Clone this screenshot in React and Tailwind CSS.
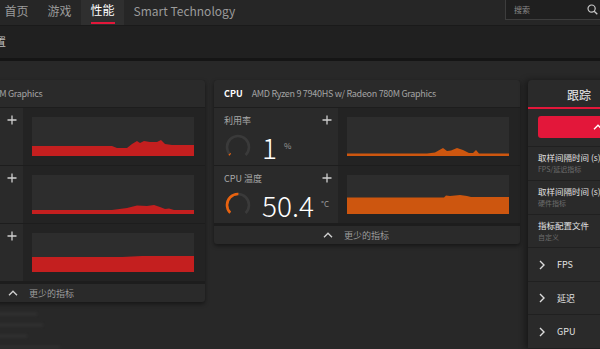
import React from "react";

function Plus() {
  return (
    <svg width="10" height="10" viewBox="0 0 10 10" className="block">
      <path d="M5 0.5V9.5M0.5 5H9.5" stroke="#cfcfcf" strokeWidth="1.3" />
    </svg>
  );
}

function ChevronUp({ color = "#cfcfcf" }) {
  return (
    <svg width="10" height="6" viewBox="0 0 10 6" className="block">
      <path d="M1 5.2L5 1.3L9 5.2" fill="none" stroke={color} strokeWidth="1.4" />
    </svg>
  );
}

function ChevronRight() {
  return (
    <svg width="6" height="10" viewBox="0 0 6 10" className="block">
      <path d="M1 1L5 5L1 9" fill="none" stroke="#dcdcdc" strokeWidth="1.4" />
    </svg>
  );
}

function Area({ pts, color }) {
  const d =
    "M" + pts.map((p) => p.join(",")).join(" L") + " L162,39 L0,39 Z";
  return (
    <svg width="162" height="39" viewBox="0 0 162 39" className="block">
      <path d={d} fill={color} />
    </svg>
  );
}

function Gauge({ pct }) {
  const r = 11;
  const C = 2 * Math.PI * r;
  const arc = C * 0.75;
  return (
    <svg width="26" height="26" viewBox="0 0 26 26" className="block">
      <circle
        cx="13"
        cy="13"
        r={r}
        fill="none"
        stroke="#3a3a3a"
        strokeWidth="2.6"
        strokeDasharray={`${arc} ${C}`}
        transform="rotate(135 13 13)"
      />
      <circle
        cx="13"
        cy="13"
        r={r}
        fill="none"
        stroke="#e8620f"
        strokeWidth="2.6"
        strokeDasharray={`${Math.max(arc * pct, 1.2)} ${C}`}
        transform="rotate(135 13 13)"
      />
    </svg>
  );
}

function MetricRow({ label, value, unit, pct, pts, color }) {
  return (
    <div className="flex h-[57px]">
      <div className="w-[124px] bg-[#2a2a2a] flex flex-col pl-[10px] pr-[6px] pt-[6px]">
        <div className="flex items-center justify-between h-[12px]">
          <span className="text-[9px] leading-none text-[#a8a8a8]">{label}</span>
          <Plus />
        </div>
        <div className="flex items-center mt-[7px] pl-[1px]">
          <Gauge pct={pct} />
          <span className="ml-[11px] text-[28px] leading-none text-white font-light">
            {value}
          </span>
          <span className="ml-[7px] text-[8px] leading-none text-[#9a9a9a] mt-[-3px]">
            {unit}
          </span>
        </div>
      </div>
      <div className="flex-1 bg-[#232323] pl-[9px] pr-[11px] pt-[9px]">
        <div className="bg-[#2d2d2d] h-[39px]">
          <Area pts={pts} color={color} />
        </div>
      </div>
    </div>
  );
}

function Footer() {
  return (
    <div className="mt-[2px] h-[18px] bg-[#2a2a2a] flex items-center justify-center pr-[22px]">
      <ChevronUp />
      <span className="ml-[11px] text-[9px] leading-none text-[#9c9c9c]">更少的指标</span>
    </div>
  );
}

const RED = "#c41f1f";
const ORANGE = "#cd560f";

const gpu1 = [
  [0, 29], [60, 29], [80, 29], [85, 31], [95, 31], [100, 27], [105, 24], [108, 26],
  [112, 24], [118, 25], [125, 25], [129, 23], [133, 27], [140, 28], [162, 28],
];
const gpu2 = [
  [0, 35], [80, 35], [95, 33], [105, 30.5], [115, 31], [122, 30], [128, 32], [133, 34],
  [137, 33.5], [142, 35], [162, 35],
];
const gpu3 = [[0, 24], [90, 24], [110, 23], [162, 23]];
const cpu1 = [
  [0, 36.5], [80, 36.5], [88, 35.5], [96, 31], [100, 34], [104, 33.5], [110, 31],
  [116, 33], [122, 36], [126, 36], [129, 33], [132, 36.5], [162, 36.5],
];
const cpu2 = [
  [0, 22.5], [97, 22.5], [99, 20.5], [103, 21], [108, 20.5], [113, 20], [120, 21],
  [124, 22], [162, 22],
];

function Card({ name, kind, rows, headerPad }) {
  return (
    <div className="w-[306px] shrink-0 bg-[#1d1d1d] rounded-[3px] overflow-hidden shadow-[0_2px_4px_rgba(0,0,0,0.45)] flex flex-col gap-px self-start">
      <div className={`h-[27px] bg-[#2a2a2a] flex items-center whitespace-nowrap ${headerPad}`}>
        <span className="text-[9px] leading-none font-bold text-white">{kind}</span>
        <span className="ml-[9px] text-[9px] leading-none text-[#a3a3a3] tracking-[-0.3px]">{name}</span>
      </div>
      {rows.map((r, i) => (
        <MetricRow key={i} {...r} />
      ))}
      <Footer />
    </div>
  );
}

function PanelItem({ title, sub }) {
  return (
    <div className="h-[34px] border-b border-[#202020] pl-[10px] pt-[5px] flex flex-col whitespace-nowrap">
      <span className="text-[8.5px] leading-[10px] text-[#e2e2e2]">{title}</span>
      <span className="mt-[3px] text-[7px] leading-[9px] text-[#6c6c6c]">{sub}</span>
    </div>
  );
}

function PanelGroup({ title }) {
  return (
    <div className="h-[34px] border-b border-[#202020] pl-[11px] flex items-center">
      <ChevronRight />
      <span className="ml-[12px] text-[9px] leading-none text-[#e2e2e2]">{title}</span>
    </div>
  );
}

export default function App() {
  return (
    <div className="w-[600px] h-[349px] overflow-hidden bg-[#282828] font-['Noto_Sans_CJK_SC','Noto_Sans',sans-serif] flex flex-col">
      {/* top nav */}
      <div className="h-[26px] shrink-0 bg-[#262626] border-b border-[#1a1a1a] flex">
        <div className="flex -ml-[5px] text-[12px] leading-none">
          <div className="px-[9.5px] flex items-center pb-[3px] text-[#9b9b9b]">首页</div>
          <div className="px-[9.5px] flex items-center pb-[3px] text-[#9b9b9b]">游戏</div>
          <div className="px-[9.5px] flex flex-col items-stretch bg-[#2f2f2f]">
            <div className="flex-1 flex items-center pb-[1px] text-white">性能</div>
            <div className="h-[2.5px] bg-[#e3173a] mb-[1px]" />
          </div>
          <div className="px-[9.5px] flex items-center pb-[3px] text-[#9b9b9b] whitespace-nowrap">
            Smart Technology
          </div>
        </div>
        <div className="ml-auto mt-[0px] h-[20px] w-[95px] bg-[#1f1f1f] border border-r-0 border-t-0 border-[#3d3d3d] flex items-center pl-[8px] pr-[2px]">
          <span className="text-[8px] leading-none text-[#8a8a8a]">搜索</span>
          <svg width="11" height="11" viewBox="0 0 11 11" className="ml-auto block">
            <circle cx="4.6" cy="4.6" r="3.6" fill="none" stroke="#c8c8c8" strokeWidth="1.2" />
            <path d="M7.2 7.2L10.3 10.3" stroke="#c8c8c8" strokeWidth="1.3" />
          </svg>
        </div>
      </div>

      {/* sub header */}
      <div className="h-[35px] shrink-0 bg-[#202020] border-b-[3px] border-[#151515] flex items-center">
        <span className="-ml-[16px] text-[11px] leading-none text-[#bdbdbd] pb-[1px]">设置</span>
      </div>

      {/* content */}
      <div className="flex-1 flex pt-[19px] -ml-[101px] min-h-0">
        <div className="w-[306px] flex flex-col shrink-0">
          <Card
            kind="GPU"
            name="AMD Radeon 780M Graphics"
            headerPad="pl-[6px]"
            rows={[
              { label: "利用率", value: "0", unit: "%", pct: 0, pts: gpu1, color: RED },
              { label: "GPU 温度", value: "42", unit: "°C", pct: 0.42, pts: gpu2, color: RED },
              { label: "VRAM", value: "38", unit: "%", pct: 0.38, pts: gpu3, color: RED },
            ]}
          />
          <div className="flex flex-col items-start gap-[7px] mt-[10px] blur-[1px]">
            <div className="w-[138px] h-[4px] bg-[#2f2f2f]" />
            <div className="w-[144px] h-[4px] bg-[#2f2f2f]" />
            <div className="w-[128px] h-[4px] bg-[#2f2f2f]" />
            <div className="w-[161px] h-[4px] bg-[#2e2e2e]" />
          </div>
        </div>
        <div className="ml-[9px]">
          <Card
            kind="CPU"
            name="AMD Ryzen 9 7940HS w/ Radeon 780M Graphics"
            headerPad="pl-[10px]"
            rows={[
              { label: "利用率", value: "1", unit: "%", pct: 0, pts: cpu1, color: ORANGE },
              { label: "CPU 温度", value: "50.4", unit: "°C", pct: 0.504, pts: cpu2, color: ORANGE },
            ]}
          />
        </div>
        {/* right panel */}
        <div className="ml-[8px] w-[150px] shrink-0 bg-[#2a2a2a] rounded-tl-[4px] shadow-[-3px_0_6px_rgba(0,0,0,0.4)] flex flex-col">
          <div className="w-[102px] h-[29px] border-b-2 border-[#e3173a] flex items-center justify-center pt-[3px]">
            <span className="text-[12px] leading-none text-[#eaeaea]">跟踪</span>
          </div>
          <div className="ml-[10px] mt-[7px] w-[120px] h-[23px] bg-[#e3173a] rounded-[3px] flex items-center justify-center">
            <ChevronUp color="#ffffff" />
          </div>
          <div className="mt-[8px] border-t border-[#202020]" />
          <PanelItem title="取样间隔时间 (s)" sub="FPS/延迟指标" />
          <PanelItem title="取样间隔时间 (s)" sub="硬件指标" />
          <PanelItem title="指标配置文件" sub="自定义" />
          <PanelGroup title="FPS" />
          <PanelGroup title="延迟" />
          <PanelGroup title="GPU" />
        </div>
      </div>
    </div>
  );
}
